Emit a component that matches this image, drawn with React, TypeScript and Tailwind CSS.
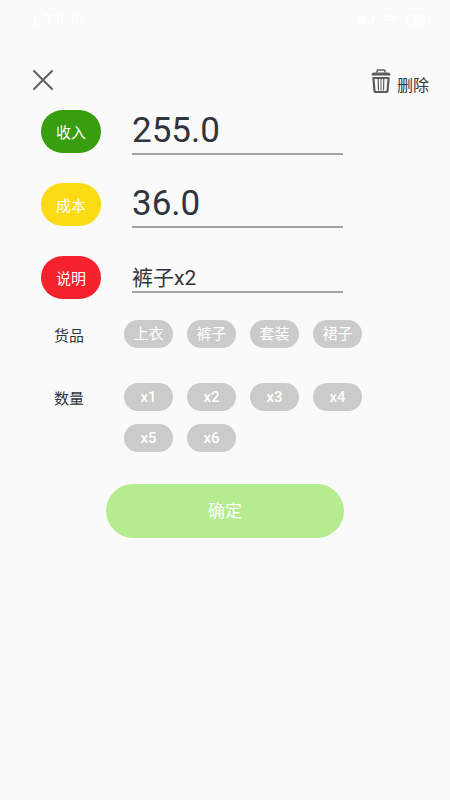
import { useState } from 'react';

const products = ['上衣', '裤子', '套装', '裙子'];
const quantities = ['x1', 'x2', 'x3', 'x4', 'x5', 'x6'];

function StatusBar() {
  return (
    <div className="flex h-10 items-center justify-between pl-7 pr-4 text-white">
      <span className="text-sm">上午8:30</span>
      <div className="flex items-center gap-2">
        <svg className="h-3 w-4" viewBox="0 0 16 12" fill="currentColor">
          <path d="M0 2h7v8H0zM9 7h2v3H9zM12 4h1v6h-1zM14 2h2v8h-2z" />
        </svg>
        <svg className="h-3 w-4" viewBox="0 0 16 12" fill="none" stroke="currentColor" strokeWidth="2">
          <path d="M1 4a10 10 0 0 1 14 0M4 7a6 6 0 0 1 8 0M7 10h2" />
        </svg>
        <svg className="h-3 w-7" viewBox="0 0 28 12" fill="none" stroke="currentColor">
          <rect x="1" y="1" width="23" height="10" rx="4" />
          <rect x="9" y="3" width="9" height="6" rx="1" fill="currentColor" />
          <path d="M26 4v4" />
        </svg>
      </div>
    </div>
  );
}

function TrashIcon() {
  return (
    <svg className="h-[26px] w-5" viewBox="0 0 20 26" fill="none" stroke="#5c5c5c">
      <path d="M6 4.5V3.2Q6 2 7.2 2h5.6Q14 2 14 3.2v1.3" strokeWidth="1.6" />
      <path d="M.6 7.6V6.6Q.8 4.4 3 4.4h14q2.2 0 2.4 2.2v1z" fill="#5c5c5c" stroke="none" />
      <path d="M2.4 10h15.2l-1 12.4q-.1 1.6-1.6 1.6H5q-1.5 0-1.6-1.6z" strokeWidth="2.2" strokeLinejoin="round" />
      <path d="M7.2 11l.3 11.5M12.8 11l-.3 11.5" strokeWidth="1.2" />
      <path d="M10 11v11.5" strokeWidth="1" />
    </svg>
  );
}

type FieldProps = {
  id: string;
  label: string;
  labelClass: string;
  inputClass: string;
  value: string;
  onChange: (value: string) => void;
};

function Field({ id, label, labelClass, inputClass, value, onChange }: FieldProps) {
  return (
    <div className="flex items-start gap-[31px]">
      <label
        htmlFor={id}
        className={`flex h-[43px] w-[60px] shrink-0 items-center justify-center rounded-full pt-1 text-[15px] text-white ${labelClass}`}
      >
        {label}
      </label>
      <input
        id={id}
        type="text"
        value={value}
        onChange={(e) => onChange(e.target.value)}
        className={`min-w-0 flex-1 border-b-2 border-[#a3a3a3] bg-transparent outline-none ${inputClass}`}
      />
    </div>
  );
}

type ChipGroupProps = {
  label: string;
  items: string[];
  chipClass: string;
  onPick: (item: string) => void;
};

function ChipGroup({ label, items, chipClass, onPick }: ChipGroupProps) {
  return (
    <div role="group" aria-label={label} className="flex items-start pl-[54px] pr-6">
      <span className="w-[70px] shrink-0 pt-1 text-[15px] leading-6">{label}</span>
      <div className="grid grid-cols-[repeat(4,49px)] gap-x-3.5 gap-y-[13px]">
        {items.map((item) => (
          <button
            key={item}
            type="button"
            onClick={() => onPick(item)}
            className={`h-7 rounded-full bg-[#cbcbcb] text-[15px] leading-7 text-white ${chipClass}`}
          >
            {item}
          </button>
        ))}
      </div>
    </div>
  );
}

export default function App() {
  const [income, setIncome] = useState('255.0');
  const [cost, setCost] = useState('36.0');
  const [product, setProduct] = useState('裤子');
  const [note, setNote] = useState('裤子x2');

  const pickProduct = (item: string) => {
    setProduct(item);
    setNote(item);
  };

  return (
    <div className="min-h-screen bg-[#fafafa] font-[Roboto,'Noto_Sans_CJK_SC',sans-serif] text-[#30353b]">
      <StatusBar />

      <header className="flex items-start justify-between pl-8 pr-[21px] pt-7">
        <button type="button" aria-label="关闭">
          <svg className="h-6 w-[22px]" viewBox="0 0 22 24" stroke="#5f5f5f" strokeWidth="2" strokeLinecap="round">
            <path d="M2 3l18 18M20 3L2 21" />
          </svg>
        </button>
        <button type="button" className="flex items-start gap-1.5">
          <TrashIcon />
          <span className="pt-1.5 text-base leading-6">删除</span>
        </button>
      </header>

      <form onSubmit={(e) => e.preventDefault()}>
        <div className="flex flex-col gap-7 pl-[41px] pr-[107px] pt-3">
          <Field
            id="income"
            label="收入"
            labelClass="bg-[#389e10]"
            inputClass="h-[45px] text-[35px]"
            value={income}
            onChange={setIncome}
          />
          <Field
            id="cost"
            label="成本"
            labelClass="bg-[#fadb14]"
            inputClass="h-[45px] text-[35px]"
            value={cost}
            onChange={setCost}
          />
          <Field
            id="note"
            label="说明"
            labelClass="bg-[#f5222d]"
            inputClass="h-[37px] pt-1 text-[21px]"
            value={note}
            onChange={setNote}
          />
        </div>

        <div className="flex flex-col gap-[35px] pt-[21px]">
          <ChipGroup label="货品" items={products} chipClass="font-normal" onPick={pickProduct} />
          <ChipGroup
            label="数量"
            items={quantities}
            chipClass="font-medium"
            onPick={(item) => setNote(product + item)}
          />
        </div>

        <div className="px-[106px] pt-8">
          <button type="submit" className="h-[54px] w-full rounded-full bg-[#b5ec8f] pt-0.5 text-[17px] text-white">
            确定
          </button>
        </div>
      </form>
    </div>
  );
}
